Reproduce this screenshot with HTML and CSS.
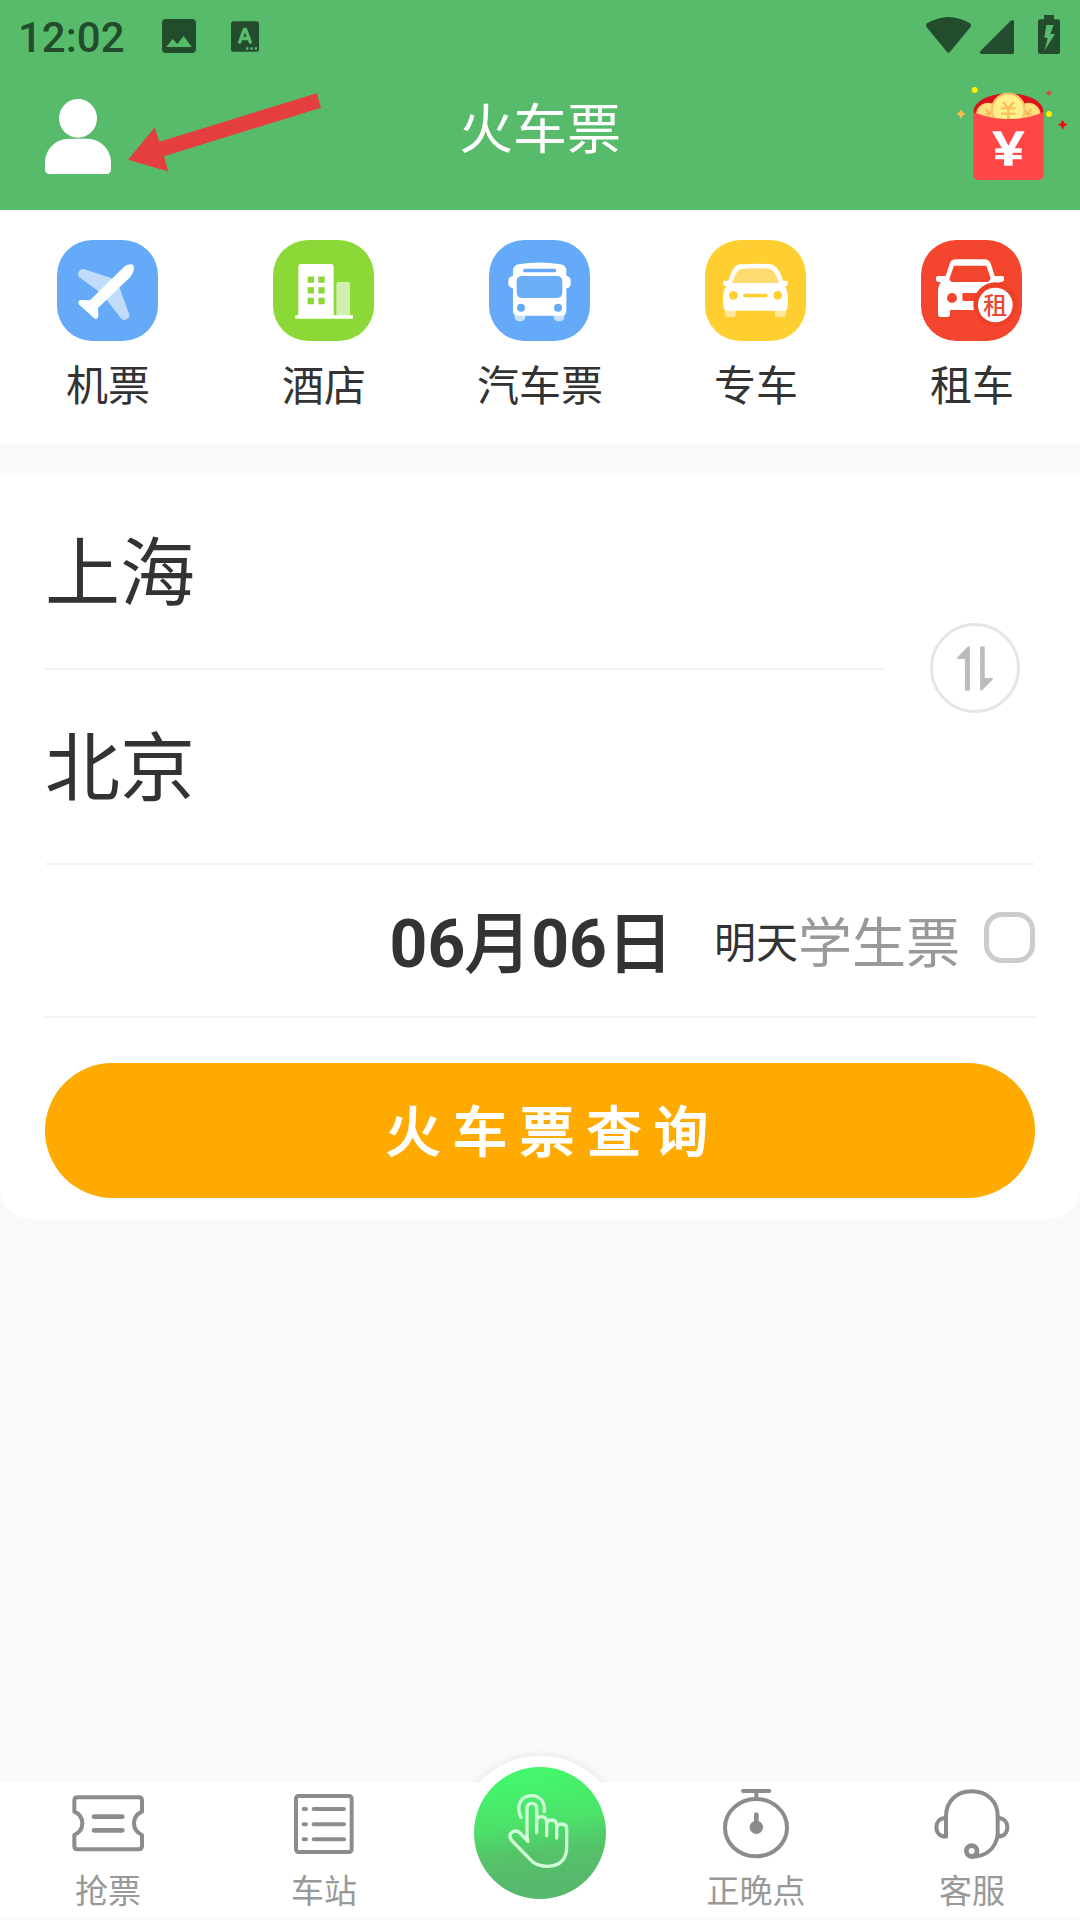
FILE: index.html
```html
<!DOCTYPE html>
<html lang="zh-CN">
<head>
    <meta charset="UTF-8">
    <meta name="viewport" content="width=device-width, initial-scale=1.0">
    <title>火车票</title>
    <link rel="stylesheet" href="styles.css">
</head>
<body>
    <header class="header">
        <div class="status-bar">
            <span class="clock">12:02</span>
            <svg class="status-image" viewBox="0 0 102 102">
                <path fill="currentColor" fill-rule="evenodd" d="M12 0H90Q102 0 102 12V90Q102 102 90 102H12Q0 102 0 90V12Q0 0 12 0ZM13 84H89L65 51L46 75L32 60Z"/>
            </svg>
            <svg class="status-a" viewBox="0 0 84 92">
                <rect width="84" height="92" rx="8" fill="currentColor"/>
                <path d="M26 63L40 25H44L58 63M31 52H53" fill="none" stroke="#58bb6b" stroke-width="10" stroke-linecap="round" stroke-linejoin="round"/>
                <path d="M45 78H52V86H45ZM58 78H65V86H58ZM71 78H78V86H71Z" fill="#58bb6b"/>
            </svg>
            <div class="status-right">
                <svg class="status-wifi" viewBox="0 0 136 109">
                    <path fill="currentColor" d="M2 20Q68 -20 134 20Q138 25 134 31L73 105Q68 111 63 105L2 31Q-2 25 2 20Z"/>
                </svg>
                <svg class="status-signal" viewBox="0 0 102 102">
                    <path fill="currentColor" d="M92 2Q102 -3 102 7V97Q102 102 97 102H5Q-3 99 2 92Z"/>
                </svg>
                <svg class="status-battery" viewBox="0 0 66 117">
                    <path fill="currentColor" fill-rule="evenodd" d="M18 0H48V13H60Q66 13 66 19V111Q66 117 60 117H6Q0 117 0 111V19Q0 13 6 13H18ZM25 30L19 68H29L20 106L51 57H37L47 30Z"/>
                </svg>
            </div>
        </div>
        <div class="app-bar">
            <svg class="user-icon" viewBox="0 0 198 225">
                <ellipse cx="99" cy="58" rx="57" ry="58" fill="#fff"/>
                <path fill="#fff" d="M72 119H126C168 119 198 153 198 191V210Q198 225 184 225H14Q0 225 0 210V191C0 153 30 119 72 119Z"/>
            </svg>
            <h1 class="title">火车票</h1>
            <svg class="red-packet" viewBox="165 255 345 291">
                <ellipse cx="325.500" cy="334" rx="105" ry="54" fill="#d9121b"/>
                <clipPath id="coins"><path d="M215 260H436V338Q325 377 215 338Z"/></clipPath>
                <g clip-path="url(#coins)">
                    <circle cx="264" cy="344" r="34" fill="#ffe082" stroke="#fbc96b" stroke-width="4"/>
                    <circle cx="386" cy="344" r="34" fill="#ffe082" stroke="#fbc96b" stroke-width="4"/>
                    <path d="M257 328L266 341L278 329M255 342H277M266 341V365M373 329L385 341L394 328M374 342H397M385 341V365" fill="none" stroke="#f8b650" stroke-width="5"/>
                    <circle cx="325" cy="330" r="49" fill="#fff08b" stroke="#fcc26c" stroke-width="7"/>
                    <path d="M309 307L325 325L341 307M303 325H347M303 341H347M325 325V358" fill="none" stroke="#fabc5c" stroke-width="7"/>
                </g>
                <path d="M220 336Q325 380 431 336V522Q431 540 413 540H238Q220 540 220 522Z" fill="#ff4747"/>
                <path fill="#fff" d="M276 394H303L325 437L348 394H374L344 445H365V458H338V465H365V478H338V497H312V478H286V465H312V458H286V445H306Z"/>
                <circle cx="224" cy="270" r="9" fill="#fff000"/>
                <circle cx="447" cy="342" r="9" fill="#fff000"/>
                <path d="M183 328L188 337L197 342L188 347L183 357L178 347L169 342L178 337Z" fill="#fcb852"/>
                <path d="M447 269L451 275L457 279L451 283L447 289L443 283L437 279L443 275Z" fill="#d54850"/>
                <path d="M488 359L493 369L503 374L493 379L488 389L483 379L473 374L483 369Z" fill="#f00d12"/>
            </svg>
        </div>
        <svg class="arrow" viewBox="386 279 579 236">
            <path fill="#e53e3e" d="M386 479L466 382L480 425L952 279L965 323L494 468L507 514Z"/>
        </svg>
    </header>

    <nav class="services">
        <a class="service">
            <svg class="service-icon" viewBox="81 60 303 303">
                <rect x="81" y="60" width="303" height="303" rx="106" fill="#65aaf8"/>
                <path fill="#c1dcfb" d="M161 147L243 174L269 204L298 284Q300 291 292 296Q281 303 274 296L232 242L203 212L147 171Q141 162 148 153Q154 146 161 147Z"/>
                <path fill="#fff" d="M281 142Q291 132 304 133Q312 134 312 146Q310 161 301 171L204 264L205 291Q200 299 194 296L146 253Q143 245 150 240L180 241Z"/>
            </svg>
            <span>机票</span>
        </a>
        <a class="service">
            <svg class="service-icon" viewBox="729 60 303 303">
                <rect x="729" y="60" width="303" height="303" rx="106" fill="#8bd837"/>
                <rect x="919" y="186" width="41" height="108" rx="6" fill="#d1efaf"/>
                <path fill="#fff" d="M805 140Q805 132 813 132H903Q911 132 911 140V286H969V296H796V286H805Z"/>
                <path stroke="#8bd837" stroke-width="19" d="M833 179H852M865 179H884M833 211H852M865 211H884M833 243H852M865 243H884"/>
            </svg>
            <span>酒店</span>
        </a>
        <a class="service">
            <svg class="service-icon" viewBox="87 60 303 303">
                <rect x="87" y="60" width="303" height="303" rx="106" fill="#65aaf8"/>
                <rect x="164" y="270" width="32" height="34" rx="13" fill="#c8e0fc"/>
                <rect x="281" y="270" width="32" height="34" rx="13" fill="#c8e0fc"/>
                <path fill="#fff" d="M159 151Q160 137 176 133Q238 122 301 133Q319 137 319 151V167Q332 170 332 181V194Q330 203 319 205V272Q319 287 304 287H174Q159 287 159 272V205Q147 202 145 193V181Q146 170 159 167Z"/>
                <rect x="170" y="168" width="137" height="66" rx="15" fill="#6baef8"/>
                <rect x="190" y="146" width="98" height="11" rx="3" fill="#65aaf8"/>
                <circle cx="183" cy="263" r="12" fill="#65aaf8"/>
                <circle cx="294" cy="263" r="12" fill="#65aaf8"/>
            </svg>
            <span>汽车票</span>
        </a>
        <a class="service">
            <svg class="service-icon" viewBox="735 60 303 303">
                <rect x="735" y="60" width="303" height="303" rx="106" fill="#ffcf31"/>
                <path d="M795 260H827V285Q827 291 821 291H802Q795 291 795 284ZM945 260H978V284Q978 291 971 291H952Q945 291 945 285Z" fill="#ffe79b"/>
                <path fill="#fff" d="M805 182C817 148 823 134 842 133Q886 129 931 133C950 136 959 151 969 182H981Q985 183 983 191Q982 199 974 199Q984 213 984 232V251Q984 263 978 272H795Q789 263 789 249V232Q789 213 799 199Q791 199 789 190Q788 183 792 182Z"/>
                <path fill="#ffdc72" d="M816 189Q829 150 843 147Q886 142 930 147Q945 150 957 189Z"/>
                <rect x="849" y="221" width="74" height="11" rx="5" fill="#ffcf31"/>
                <circle cx="820" cy="226" r="13" fill="#ffcf31"/>
                <circle cx="953" cy="226" r="13" fill="#ffcf31"/>
            </svg>
            <span>专车</span>
        </a>
        <a class="service">
            <svg class="service-icon" viewBox="183 60 303 303">
                <rect x="183" y="60" width="303" height="303" rx="106" fill="#f4452e"/>
                <path fill="#fff" fill-rule="evenodd" d="M257 168L268 134Q273 118 287 118H373Q388 118 393 133L404 168H428Q432 169 432 174V181Q430 186 424 186H418V270H270V283Q270 291 262 291H242Q234 291 234 283V211Q235 197 242 186H234Q228 185 228 179V173Q229 168 233 168ZM282 137L268 176Q270 184 276 186H384Q391 182 392 174L379 137ZM276 219A15 15 0 1 0 276 249A15 15 0 1 0 276 219ZM311 219Q307 219 307 223V238Q307 243 312 243H360V219Z"/>
                <circle cx="406" cy="253" r="66" fill="#ec4029"/>
                <circle cx="406" cy="255" r="52" fill="#fff"/>
                <text class="rent-text" x="406" y="282" text-anchor="middle">租</text>
            </svg>
            <span>租车</span>
        </a>
    </nav>

    <main class="search-card">
        <div class="cities">
            <div class="city city-from">上海</div>
            <div class="city">北京</div>
            <button class="swap" aria-label="交换">
                <svg class="swap-icon" viewBox="289 138 109 135">
                    <path fill="#bbb" d="M289 173L321 140Q328 135 328 142V269Q328 273 324 273H317Q313 273 313 269V177H292Q287 177 289 173ZM359 142Q359 138 363 138H369Q373 138 373 142V234H394Q400 234 397 239L365 271Q359 275 359 268Z"/>
                </svg>
            </button>
        </div>
        <div class="date-row">
            <span class="date">06<i>月</i>06<i>日</i></span>
            <span class="day">明天</span>
            <span class="student">学生票</span>
            <span class="checkbox"></span>
        </div>
        <button class="search-btn">火车票查询</button>
    </main>

    <footer class="tabs">
        <div class="tab-bump"></div>
        <div class="tab-list">
            <a class="tab">
                <svg class="tab-icon" viewBox="116 142 228 216">
                    <path class="line" d="M139 173H322Q332 173 332 183V216Q308 226 308 251Q308 276 332 286V319Q332 329 322 329H139Q129 329 129 319V286Q153 276 153 251Q153 226 129 216V183Q129 173 139 173Z"/>
                    <path class="line thick" d="M188 231H273M188 272H273"/>
                </svg>
                <span>抢票</span>
            </a>
            <a class="tab">
                <svg class="tab-icon" viewBox="767 142 228 216">
                    <rect class="line" x="797" y="169" width="167" height="168" rx="8"/>
                    <path class="line" d="M820 208H827M850 208H941M820 254H827M850 254H941M820 299H827M850 299H941"/>
                </svg>
                <span>车站</span>
            </a>
            <a class="tab tab-center">
                <svg class="tab-main" viewBox="102 81 396 396">
                    <linearGradient id="main-bg" x1="0.42" y1="0" x2="0.55" y2="1">
                        <stop offset="0.1" stop-color="#45f56b"/>
                        <stop offset="0.42" stop-color="#4ce169"/>
                        <stop offset="0.65" stop-color="#55c369"/>
                        <stop offset="0.85" stop-color="#57b96c"/>
                    </linearGradient>
                    <circle cx="300" cy="279" r="198" fill="url(#main-bg)"/>
                    <path class="hand" d="M243 232C224 191 249 167 275 167C299 167 319 188 312 215M264 304L261 290V206Q261 190 275 190Q290 190 290 206V278M290 243Q290 230 304 230Q320 230 320 246V287M320 253Q321 240 335 240Q350 241 350 256V294M350 264Q351 253 365 252Q380 252 380 266V323Q379 376 323 379Q295 379 277 365L214 300Q204 285 217 276Q229 269 240 279L264 304"/>
                </svg>
            </a>
            <a class="tab">
                <svg class="tab-icon" viewBox="112 142 228 216">
                    <ellipse class="line" cx="226" cy="264" rx="93" ry="86"/>
                    <path class="line" d="M187 154H266M227 155V178"/>
                    <path class="line thick" d="M227 225V260"/>
                    <circle cx="227" cy="263" r="20" fill="#8c8c8c"/>
                </svg>
                <span>正晚点</span>
            </a>
            <a class="tab">
                <svg class="tab-icon" viewBox="761 142 228 216">
                    <path class="line" d="M797 291V228C798 184 829 155 874 155C920 155 952 185 952 228V285C946 326 918 350 874 351M797 235C777 235 768 248 768 263C768 279 779 291 797 291M952 235C970 235 981 247 981 263C981 279 970 291 952 291"/>
                    <circle class="line thick" cx="874" cy="334" r="16"/>
                </svg>
                <span>客服</span>
            </a>
        </div>
    </footer>
</body>
</html>
```
FILE: styles.css
```css
* {
    box-sizing: border-box;
}

body {
    display: flex;
    flex-direction: column;
    margin: 0;
    height: 1920px;
    background: #f9f9f9;
    color: #333;
    font-family: Roboto, "Noto Sans CJK SC", sans-serif;
    overflow: hidden;
}

svg {
    display: block;
    flex-shrink: 0;
}

button {
    border: none;
    padding: 0;
    font-family: inherit;
}

/* header */
.header {
    position: relative;
    height: 210px;
    background: #58bb6b;
}

.status-bar {
    display: flex;
    align-items: center;
    height: 72px;
    padding: 0 20px 0 18px;
    color: #234c2c;
}

.clock {
    width: 144px;
    font-size: 42px;
    font-weight: 500;
    line-height: 72px;
    padding-top: 3px;
}

.status-image {
    width: 34px;
    height: 34px;
}

.status-a {
    width: 28px;
    height: 31px;
    margin-left: 35px;
}

.status-right {
    display: flex;
    align-items: flex-end;
    margin-left: auto;
    padding-bottom: 3px;
}

.status-wifi {
    width: 45px;
    height: 36px;
    margin-bottom: 1px;
}

.status-signal {
    width: 34px;
    height: 34px;
    margin-left: 9px;
}

.status-battery {
    width: 22px;
    height: 39px;
    margin-left: 24px;
}

.app-bar {
    display: grid;
    grid-template-columns: 1fr auto 1fr;
    align-items: start;
    padding: 13px 10px 0 45px;
}

.user-icon {
    width: 66px;
    height: 75px;
    margin-top: 14px;
}

.title {
    margin: 0 0 0 -35px;
    color: #fff;
    font-size: 54px;
    font-weight: 400;
    line-height: 92px;
}

.red-packet {
    width: 115px;
    height: 97px;
    justify-self: end;
}

.arrow {
    position: absolute;
    left: 128px;
    top: 93px;
    width: 193px;
    height: 79px;
}

/* services */
.services {
    display: flex;
    height: 233px;
    padding-top: 30px;
    background: #fff;
}

.service {
    flex: 1;
    display: flex;
    flex-direction: column;
    align-items: center;
    font-size: 42px;
    line-height: 60px;
}

.service-icon {
    width: 101px;
    height: 101px;
    margin: 0 1px 16px 0;
}

.rent-text {
    font-size: 72px;
    font-weight: 500;
    fill: #ea4935;
}

/* search */
.search-card {
    height: 746px;
    margin-top: 30px;
    padding: 0 45px;
    background: #fff;
    border-radius: 0 0 30px 30px;
}

.cities {
    position: relative;
    border-bottom: 2px solid #f3f3f3;
}

.city {
    height: 193px;
    font-size: 75px;
    line-height: 199px;
}

.city-from {
    height: 197px;
    margin-right: 150px;
    line-height: 202px;
    border-bottom: 2px solid #f3f3f3;
}

.swap {
    position: absolute;
    right: 15px;
    top: 150px;
    display: flex;
    align-items: center;
    justify-content: center;
    width: 90px;
    height: 90px;
    background: #fff;
    border: 3px solid #e6e6e6;
    border-radius: 50%;
}

.swap-icon {
    width: 36px;
    height: 45px;
}

.date-row {
    display: flex;
    align-items: center;
    justify-content: flex-end;
    height: 153px;
    border-bottom: 2px solid #f3f3f3;
}

.date {
    padding-bottom: 5px;
    font-size: 66px;
    font-weight: 700;
}

.date i {
    font-style: normal;
    font-weight: 400;
    -webkit-text-stroke: 2px #333;
}

.day {
    margin-left: 41px;
    padding-bottom: 2px;
    font-size: 42px;
}

.student {
    padding-bottom: 3px;
    color: #999;
    font-size: 54px;
}

.checkbox {
    width: 51px;
    height: 51px;
    margin: 0 0 6px 24px;
    border: 5px solid #ccc;
    border-radius: 18px;
}

.search-btn {
    display: block;
    width: 100%;
    height: 135px;
    margin-top: 45px;
    padding: 0 0 5px 27px;
    background: #ffaa00;
    border-radius: 68px;
    color: #fff;
    font-size: 54px;
    font-weight: 400;
    letter-spacing: 13px;
    -webkit-text-stroke: 2px #fff;
}

/* bottom tabs */
.tabs {
    position: relative;
    margin-top: auto;
    height: 138px;
    padding-bottom: 3px;
}

.tab-bump {
    position: absolute;
    left: 456px;
    top: -26px;
    width: 168px;
    height: 138px;
    background: #fff;
    border-radius: 84px 84px 0 0;
    box-shadow: 0 0 9px rgba(0, 0, 0, 0.09);
}

.tab-list {
    position: relative;
    display: flex;
    height: 135px;
    background: #fff;
}

.tab {
    flex: 1;
    display: flex;
    flex-direction: column;
    align-items: center;
    padding-top: 5px;
    color: #999;
    font-size: 33px;
    line-height: 48px;
}

.tab-icon {
    width: 76px;
    height: 72px;
    margin: 0 1px 9px 0;
}

.tab-center {
    padding-top: 0;
}

.tab-main {
    width: 132px;
    height: 132px;
    margin-top: -15px;
}

.line {
    fill: none;
    stroke: #8c8c8c;
    stroke-width: 12;
    stroke-linecap: round;
    stroke-linejoin: round;
}

.thick {
    stroke-width: 14;
}

.hand {
    fill: none;
    stroke: #d0fbd8;
    stroke-width: 10;
    stroke-linecap: round;
    stroke-linejoin: round;
}
```
